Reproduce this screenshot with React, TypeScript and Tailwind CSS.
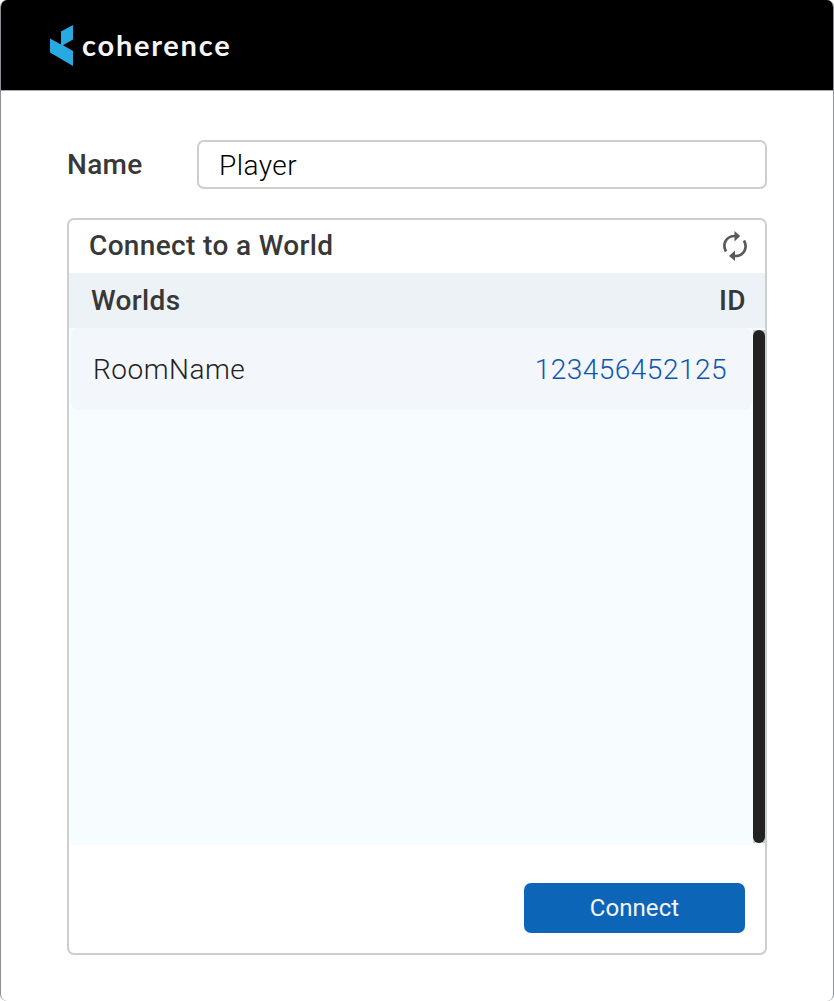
function LogoMark() {
  return (
    <svg width="24" height="42" viewBox="0 0 24 42" fill="#29a9e1" aria-hidden="true">
      <path d="M11 6.5 L23 0 V14.5 L13 20.3 L23 26 V41 L0 27.5 V13.5 L11 19.5 Z" />
    </svg>
  );
}

function RefreshIcon() {
  return (
    <svg width="24" height="30" viewBox="0 0 24 30" fill="none" stroke="#5a5a5a" strokeWidth="2.7" aria-hidden="true">
      <path d="M3 20.5 C-1 13 3 5 12 5" />
      <path d="M21 9.5 C25 17 21 25 12 25" />
      <path d="M11.5 0 L17.2 5 L11.5 10.4 Z" fill="#5a5a5a" stroke="none" />
      <path d="M12 19.6 L6 25 L12 30 Z" fill="#5a5a5a" stroke="none" />
    </svg>
  );
}

export default function App() {
  return (
    <div className="h-[1001px] w-[834px] bg-white font-['Roboto',sans-serif] text-[28px] leading-none text-[#333]">
      <div className="flex h-full flex-col overflow-hidden rounded-[7px] border-x border-[#8c8f94]">
        <header className="-mx-px flex h-[90px] shrink-0 items-start border-x border-white bg-black bg-clip-padding pl-[49px] pt-[25px]">
          <LogoMark />
          <span className="ml-2 mt-[6px] font-['Lato',sans-serif] text-[29px] font-bold leading-[28px] tracking-[1.75px] text-[#f5f5f5]">
            coherence
          </span>
        </header>
        <main className="flex flex-1 flex-col border-t border-[#aaa] px-[66px] pb-[46px] pt-[49px]">
          <div className="flex h-[49px] items-center">
            <label htmlFor="name" className="w-[130px] font-medium tracking-[0.3px] text-[#383838]">Name</label>
            <input
              id="name"
              defaultValue="Player"
              className="h-[49px] min-w-0 flex-1 rounded-[7px] border-2 border-[#cccfcd] bg-white pl-5 pr-[19px] pt-[2px] font-light tracking-[0.45px] text-black outline-none"
            />
          </div>
          <section className="mt-[29px] flex flex-1 flex-col rounded-[7px] border-2 border-[#cccfcd]">
            <div className="flex h-[53px] items-center justify-between pl-5 pr-[18px]">
              <h1 className="-mt-[2px] font-medium tracking-[0.35px] text-[#383838]">Connect to a World</h1>
              <button className="-mt-px" aria-label="Refresh"><RefreshIcon /></button>
            </div>
            <div className="flex h-[55px] items-center justify-between bg-[#edf2f6] pl-[22px] pr-[19px] font-medium tracking-[0.35px] text-[#383838]">
              <span>Worlds</span>
              <span>ID</span>
            </div>
            <div className="flex h-[517px] justify-between bg-[#f7fcff] pl-[2px]">
              <div className="flex h-[82px] w-[681px] items-center justify-between rounded-lg bg-[#f3f6fa] pl-[22px] pr-[25px] pt-[2px] font-light tracking-[0.5px] text-[#222]">
                <span>RoomName</span>
                <span className="text-[#0f56b0]">123456452125</span>
              </div>
              <div className="mt-[2px] h-[513px] w-3 bg-[#ccc]">
                <div className="h-full rounded-full bg-[#222]" />
              </div>
            </div>
            <div className="flex justify-end pr-5 pt-[38px]">
              <button className="h-[50px] w-[221px] rounded-[7px] bg-[#0d65b8] text-2xl text-[#f4f5fc] tracking-[0.1px]">Connect</button>
            </div>
          </section>
        </main>
      </div>
    </div>
  );
}
